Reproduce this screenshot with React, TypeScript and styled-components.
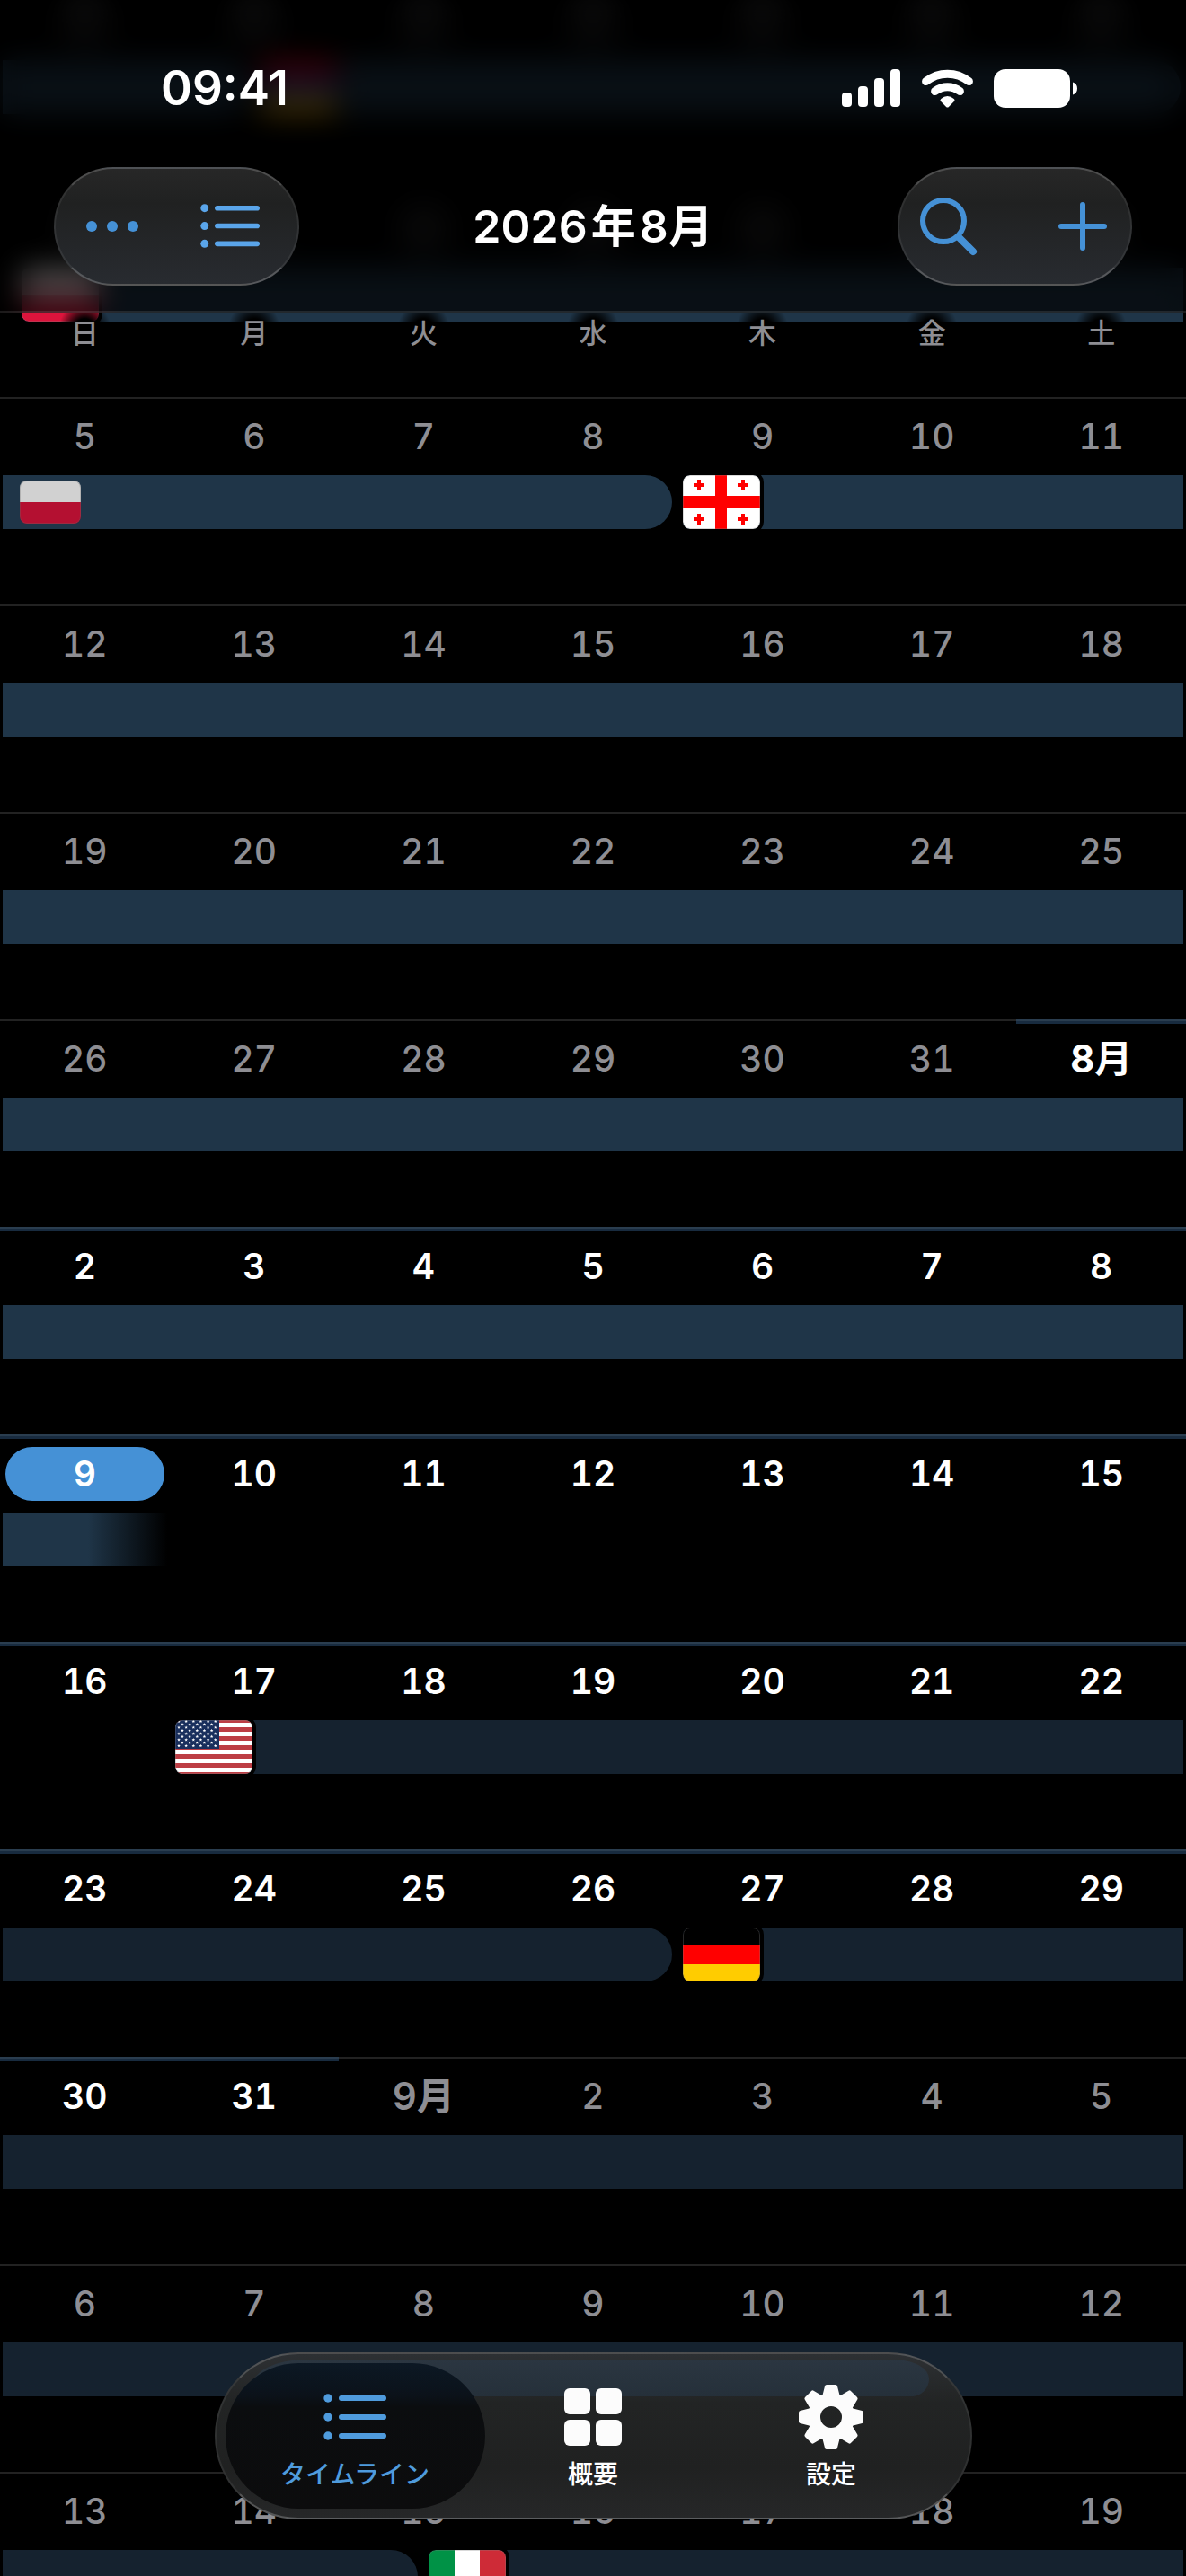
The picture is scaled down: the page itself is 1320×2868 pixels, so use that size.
import React from "react";
import styled, { createGlobalStyle, css } from "styled-components";

const blue = "#4591d6";
const grey = "#8e8e93";

const GlobalStyle = createGlobalStyle`
  *, *::before, *::after { box-sizing: border-box; }
  body {
    margin: 0;
    background: #000;
    color: #fff;
    font-family: Inter, "Noto Sans CJK JP", sans-serif;
  }
  button { font: inherit; color: inherit; border: 0; padding: 0; margin: 0; background: none; }
  svg { display: block; }
`;

const Screen = styled.div`
  position: relative;
  height: 100vh;
  overflow: hidden;
`;

/* ---------- timeline ---------- */

/* The list rests slightly scrolled, with its first week cut off at the top. */
const Weeks = styled.ol`
  list-style: none;
  padding: 0;
  margin: -20px 0 0;
`;

const Week = styled.li`
  height: 231px;
`;

const Days = styled.div`
  display: grid;
  grid-template-columns: repeat(7, 1fr);
  height: 87px;
`;

type Tone = "dim" | "current" | "covered";

const Day = styled.div<{ $tone: Tone }>`
  display: flex;
  justify-content: center;
  align-items: flex-start;
  padding: 14px 6px 0;
  background: linear-gradient(#222 0 2px, transparent 2px);
  ${(p) =>
    p.$tone === "current" &&
    css`
      background: linear-gradient(#2a3d4f 0 2px, #182b3f 2px 5px, transparent 5px);
    `}
  ${(p) =>
    p.$tone === "covered" &&
    css`
      background: radial-gradient(ellipse 40px 40px at center, #2c2c2e, transparent);
    `}
`;

const DayLabel = styled.time<{ $tone: Tone; $month?: boolean; $today?: boolean }>`
  width: 100%;
  height: 60px;
  line-height: 60px;
  border-radius: 30px;
  text-align: center;
  font-size: ${(p) => (p.$month ? 42 : 39)}px;
  font-weight: ${(p) => (p.$tone === "current" ? (p.$month ? 700 : 600) : p.$month ? 600 : 500)};
  font-variant-numeric: tabular-nums;
  color: ${(p) => (p.$tone === "current" ? "#fff" : grey)};
  background: ${(p) => (p.$today ? blue : "transparent")};
`;

/* Two columns per day: a stay can change at midday. */
const Track = styled.div`
  display: grid;
  grid-template-columns: repeat(14, 1fr);
  height: 60px;
`;

type Edge = "through" | "end" | "fade";

const Stay = styled.div<{
  $from: number;
  $to: number;
  $edge: Edge;
  $starts: boolean;
  $future?: boolean;
  $inset?: boolean;
}>`
  grid-row: 1;
  grid-column: ${(p) => p.$from + 1} / ${(p) => p.$to + 1};
  display: flex;
  align-items: center;
  height: 60px;
  margin-left: ${(p) => (p.$inset ? 24 : p.$starts ? 6 : 3)}px;
  margin-right: ${(p) => (p.$edge === "end" ? 6 : 3)}px;
  padding-left: ${(p) => (p.$starts ? 0 : 19)}px;
  border-radius: ${(p) => (p.$starts ? 8 : 0)}px ${(p) => (p.$edge === "end" ? 30 : 0)}px
    ${(p) => (p.$edge === "end" ? 30 : 0)}px ${(p) => (p.$starts ? 8 : 0)}px;
  background: ${(p) =>
    p.$edge === "fade"
      ? "linear-gradient(90deg, #1f3548 52%, transparent)"
      : p.$future
        ? "#15222f"
        : "#1f3548"};
  overflow: hidden;
`;

const FlagBox = styled.span<{ $small?: boolean }>`
  position: relative;
  flex: none;
  width: ${(p) => (p.$small ? 68 : 86)}px;
  height: ${(p) => (p.$small ? 48 : 60)}px;
  border-radius: 8px;
  overflow: hidden;
  ${(p) => (p.$small ? "filter: brightness(0.82);" : "outline: 4px solid #000;")}
  svg { width: 100%; height: 100%; }
  &::after {
    content: "";
    position: absolute;
    inset: 0;
    border-radius: 8px;
    border: 1px solid rgba(128, 128, 128, 0.3);
  }
`;

type Country = "am" | "pl" | "ge" | "us" | "de" | "it";

const starPath = Array.from({ length: 10 }, (_, i) => {
  const r = i % 2 ? 0.8 : 1.9;
  const a = (Math.PI * i) / 5 - Math.PI / 2;
  return `${i ? "L" : "M"}${(r * Math.cos(a)).toFixed(2)} ${(r * Math.sin(a)).toFixed(2)}`;
}).join("") + "Z";

const stars: [number, number][] = [];
for (let r = 0; r < 9; r++) {
  const odd = r % 2;
  for (let c = 0; c < (odd ? 5 : 6); c++) stars.push([4 + odd * 4 + c * 8.15, 1.5 + r * 3.4]);
}

const drawings: Record<Country, React.ReactNode> = {
  am: (
    <>
      <path fill="#d90012" d="M0 0h86v20H0z" />
      <path fill="#0033a0" d="M0 20h86v20H0z" />
      <path fill="#f2a800" d="M0 40h86v20H0z" />
    </>
  ),
  pl: (
    <>
      <path fill="#fff" d="M0 0h86v30H0z" />
      <path fill="#dc143c" d="M0 30h86v30H0z" />
    </>
  ),
  ge: (
    <>
      <path fill="#fff" d="M0 0h86v60H0z" />
      <path fill="#f00" d="M36 0h13v60H36zM0 23h86v14H0z" />
      <path
        stroke="#f00"
        strokeWidth="4"
        d="M12 11h12M18 5v12M61 11h12M67 5v12M12 49h12M18 43v12M61 49h12M67 43v12"
      />
    </>
  ),
  us: (
    <>
      <path fill="#fff" d="M0 0h86v60H0z" />
      {[-2, 8, 18, 28, 38, 48, 58].map((y) => (
        <rect key={y} y={y} width="86" height="5" fill="#bd3d44" />
      ))}
      <path fill="#192f5d" d="M0 0h49v32H0z" />
      {stars.map(([x, y]) => (
        <path key={`${x}-${y}`} d={starPath} fill="#fff" transform={`translate(${x} ${y})`} />
      ))}
    </>
  ),
  de: (
    <>
      <path fill="#000" d="M0 0h86v20H0z" />
      <path fill="#f00" d="M0 20h86v21H0z" />
      <path fill="#fc0" d="M0 41h86v19H0z" />
    </>
  ),
  it: (
    <>
      <path fill="#009246" d="M0 0h29v60H0z" />
      <path fill="#fff" d="M29 0h28v60H29z" />
      <path fill="#ce2b37" d="M57 0h29v60H57z" />
    </>
  ),
};

function Flag({ country, small }: { country: Country; small?: boolean }) {
  return (
    <FlagBox $small={small}>
      <svg viewBox="0 0 86 60" preserveAspectRatio="none" aria-hidden="true">
        {drawings[country]}
      </svg>
    </FlagBox>
  );
}

interface StayData {
  from?: number;
  to?: number;
  edge?: Edge;
  flag?: Country;
  smallFlag?: Country;
  future?: boolean;
  inset?: boolean;
}

interface WeekData {
  days: string[];
  current?: [number, number];
  today?: number;
  stays: StayData[];
}

const range = (from: number) => Array.from({ length: 7 }, (_, i) => String(from + i));

const coveredWeeks: StayData[][] = [
  [{ to: 3, edge: "end" }, { from: 3, flag: "am", edge: "end" }],
  [{ flag: "pl", inset: true }],
];

const weeks: WeekData[] = [
  { days: range(5), stays: [{ to: 8, edge: "end", smallFlag: "pl" }, { from: 8, flag: "ge" }] },
  { days: range(12), stays: [{}] },
  { days: range(19), stays: [{}] },
  { days: ["26", "27", "28", "29", "30", "31", "8月"], current: [6, 7], stays: [{}] },
  { days: range(2), current: [0, 7], stays: [{}] },
  { days: range(9), current: [0, 7], today: 0, stays: [{ to: 2, edge: "fade" }] },
  { days: range(16), current: [0, 7], stays: [{ from: 2, flag: "us", future: true }] },
  {
    days: range(23),
    current: [0, 7],
    stays: [{ to: 8, edge: "end", future: true }, { from: 8, flag: "de", future: true }],
  },
  { days: ["30", "31", "9月", "2", "3", "4", "5"], current: [0, 2], stays: [{ future: true }] },
  { days: range(6), stays: [{ future: true }] },
  {
    days: range(13),
    stays: [{ to: 5, edge: "end", future: true }, { from: 5, flag: "it", future: true }],
  },
];

function Stays({ stays }: { stays: StayData[] }) {
  return (
    <Track>
      {stays.map((s, i) => (
        <Stay
          key={i}
          $from={s.from ?? 0}
          $to={s.to ?? 14}
          $edge={s.edge ?? "through"}
          $starts={!!s.flag}
          $future={s.future}
          $inset={s.inset}
        >
          {s.flag && <Flag country={s.flag} />}
          {s.smallFlag && <Flag country={s.smallFlag} small />}
        </Stay>
      ))}
    </Track>
  );
}

function Timeline() {
  return (
    <Weeks>
      {coveredWeeks.map((stays, i) => (
        <Week key={`covered-${i}`}>
          <Days>
            {[0, 1, 2, 3, 4, 5, 6].map((d) => (
              <Day key={d} $tone="covered" />
            ))}
          </Days>
          <Stays stays={stays} />
        </Week>
      ))}
      {weeks.map((week, w) => (
        <Week key={w}>
          <Days>
            {week.days.map((label, d) => {
              const [a, b] = week.current ?? [0, 0];
              const tone: Tone = d >= a && d < b ? "current" : "dim";
              return (
                <Day key={d} $tone={tone}>
                  <DayLabel $tone={tone} $month={label.endsWith("月")} $today={week.today === d}>
                    {label}
                  </DayLabel>
                </Day>
              );
            })}
          </Days>
          <Stays stays={week.stays} />
        </Week>
      ))}
    </Weeks>
  );
}

/* ---------- header ---------- */

const Header = styled.header`
  position: absolute;
  inset: 0 0 auto;
`;

const NavArea = styled.div`
  height: 348px;
  border-bottom: 2px solid rgba(255, 255, 255, 0.1);
  background: rgba(0, 0, 0, 0.7);
  backdrop-filter: blur(16px);
`;

const StatusBar = styled.div`
  display: flex;
  align-items: center;
  justify-content: space-between;
  height: 186px;
  padding: 10px 120px 0 179px;
`;

const Clock = styled.time`
  font-size: 53px;
  line-height: 64px;
  font-weight: 600;
`;

const StatusIcons = styled.div`
  display: flex;
  align-items: center;
  gap: 23px;
`;

const Toolbar = styled.div`
  display: grid;
  grid-template-columns: 1fr auto 1fr;
  align-items: center;
  padding: 0 60px;
`;

const Title = styled.h1`
  display: flex;
  gap: 4px;
  margin: 0;
  font-size: 50px;
  line-height: 60px;
  font-weight: 600;
`;

const glass = css`
  border: 2px solid rgba(255, 255, 255, 0.07);
  border-top-color: rgba(255, 255, 255, 0.18);
  border-bottom-color: rgba(255, 255, 255, 0.22);
`;

const ButtonGroup = styled.div<{ $end?: boolean }>`
  ${glass}
  display: flex;
  justify-content: space-between;
  justify-self: ${(p) => (p.$end ? "end" : "start")};
  width: ${(p) => (p.$end ? 261 : 273)}px;
  height: 132px;
  padding-right: ${(p) => (p.$end ? 0 : 12)}px;
  border-radius: 66px;
  background: linear-gradient(#272727, #202121 30%, #282b30);
`;

const IconButton = styled.button<{ $wide?: boolean }>`
  display: flex;
  align-items: center;
  justify-content: center;
  width: ${(p) => (p.$wide ? 126 : 106)}px;
  color: ${blue};
`;

const Weekdays = styled.div`
  display: grid;
  grid-template-columns: repeat(7, 1fr);
`;

const Weekday = styled.div`
  text-align: center;
  font-size: 31px;
  line-height: 46px;
  font-weight: 500;
  color: ${grey};
  background: radial-gradient(ellipse 30px 36px at center, #000 45%, transparent);
`;

function SignalIcon() {
  return (
    <svg width="66" height="42" viewBox="0 0 66 42" fill="#fff" role="img" aria-label="電波">
      <rect x="0" y="26" width="11" height="16" rx="4" />
      <rect x="18" y="19" width="11" height="23" rx="4" />
      <rect x="36" y="10" width="11" height="32" rx="4" />
      <rect x="54" y="0" width="11" height="42" rx="4" />
    </svg>
  );
}

function WifiIcon() {
  return (
    <svg width="57" height="43" viewBox="0 0 57 43" fill="none" role="img" aria-label="Wi-Fi">
      <g stroke="#fff" strokeWidth="9" strokeLinecap="round">
        <path d="M4.6 13.6A38 38 0 0 1 52.4 13.6" />
        <path d="M14.6 24.6A22 22 0 0 1 42.4 24.6" />
      </g>
      <path
        d="M28.5 40.5L22.6 34.6Q28.5 29.6 34.4 34.6Z"
        fill="#fff"
        stroke="#fff"
        strokeWidth="4"
        strokeLinejoin="round"
      />
    </svg>
  );
}

function BatteryIcon() {
  return (
    <svg width="94" height="43" viewBox="0 0 94 43" fill="#fff" role="img" aria-label="バッテリー">
      <rect width="85" height="43" rx="13" />
      <path d="M88 14.5C91.3 15.5 93 18 93 21.5S91.3 27.5 88 28.5Z" />
    </svg>
  );
}

function ListIcon({ width, color }: { width: number; color: string }) {
  return (
    <svg width={width} viewBox="0 0 70 52" aria-hidden="true" fill={color}>
      {[5, 26, 47].map((y) => (
        <g key={y}>
          <circle cx="5" cy={y} r="4.7" />
          <rect x="17" y={y - 3} width="53" height="6" rx="3" />
        </g>
      ))}
    </svg>
  );
}

function MoreIcon() {
  return (
    <svg width="60" height="12" viewBox="0 0 60 12" fill="currentColor" aria-hidden="true">
      <circle cx="7" cy="6" r="6" />
      <circle cx="30" cy="6" r="6" />
      <circle cx="53" cy="6" r="6" />
    </svg>
  );
}

function SearchIcon() {
  return (
    <svg width="76" height="66" viewBox="0 0 76 66" fill="none" stroke="currentColor" aria-hidden="true">
      <circle cx="34" cy="27" r="23" strokeWidth="6" />
      <path d="M51 45L67 61" strokeWidth="8" strokeLinecap="round" />
    </svg>
  );
}

function PlusIcon() {
  return (
    <svg width="54" height="54" viewBox="0 0 54 54" stroke="currentColor" strokeWidth="6" strokeLinecap="round" aria-hidden="true">
      <path d="M27 3V51M3 27H51" />
    </svg>
  );
}

/* ---------- tab bar ---------- */

const TabDock = styled.div`
  position: absolute;
  inset: auto 0 63px;
  display: flex;
  justify-content: center;
`;

const TabBar = styled.nav`
  ${glass}
  position: relative;
  display: flex;
  height: 186px;
  padding: 10px;
  border-radius: 93px;
  background: linear-gradient(#2d3033, #222424 30%, #202121 70%, #262728);

  &::before {
    content: "";
    position: absolute;
    inset: 6px 46px auto 40px;
    height: 41px;
    border-radius: 60px 40px 20px 20px / 30px 22px 20px 0;
    background: linear-gradient(#2b3641, #25303a);
  }
`;

const Tab = styled.button<{ $active?: boolean }>`
  position: relative;
  display: flex;
  flex-direction: column;
  align-items: center;
  width: 289px;
  height: 162px;
  border-radius: 81px;
  color: ${(p) => (p.$active ? "#4f9bdd" : "#fff")};
  background: ${(p) => (p.$active ? "linear-gradient(#0c1824, #0b121a 22%, #0b0d0f 30%, #0c0c0d)" : "none")};

  & + & { margin-left: -24px; }
`;

const TabIcon = styled.span`
  display: grid;
  place-items: center;
  height: 72px;
  margin-top: 24px;
`;

const TabLabel = styled.span`
  font-size: 28px;
  line-height: 40px;
  margin-top: 8px;
  font-weight: 500;
`;

function GridIcon() {
  return (
    <svg width="64" height="64" viewBox="0 0 64 64" fill="#fcfcfc" aria-hidden="true">
      <rect x="0" y="0" width="29" height="29" rx="6" />
      <rect x="35" y="0" width="29" height="29" rx="6" />
      <rect x="0" y="35" width="29" height="29" rx="6" />
      <rect x="35" y="35" width="29" height="29" rx="6" />
    </svg>
  );
}

function GearIcon() {
  return (
    <svg width="72" height="72" viewBox="-36 -36 72 72" aria-hidden="true">
      <circle r="19" fill="none" stroke="#fcfcfc" strokeWidth="14" />
      {[0, 45, 90, 135, 180, 225, 270, 315].map((a) => (
        <path
          key={a}
          d="M-8 -22L-5 -34L5 -34L8 -22Z"
          transform={`rotate(${a})`}
          fill="#fcfcfc"
          stroke="#fcfcfc"
          strokeWidth="4"
          strokeLinejoin="round"
        />
      ))}
    </svg>
  );
}

export default function App() {
  return (
    <>
      <GlobalStyle />
      <Screen>
        <main>
          <Timeline />
        </main>
        <Header>
          <NavArea>
            <StatusBar>
              <Clock>09:41</Clock>
              <StatusIcons>
                <SignalIcon />
                <WifiIcon />
                <BatteryIcon />
              </StatusIcons>
            </StatusBar>
            <Toolbar>
              <ButtonGroup>
                <IconButton $wide aria-label="その他">
                  <MoreIcon />
                </IconButton>
                <IconButton $wide aria-label="リスト表示">
                  <ListIcon width={66} color="#5aa5ea" />
                </IconButton>
              </ButtonGroup>
              <Title>
                <span>2026</span>
                <span>年</span>
                <span>8月</span>
              </Title>
              <ButtonGroup $end>
                <IconButton aria-label="検索">
                  <SearchIcon />
                </IconButton>
                <IconButton aria-label="追加">
                  <PlusIcon />
                </IconButton>
              </ButtonGroup>
            </Toolbar>
          </NavArea>
          <Weekdays>
            {["日", "月", "火", "水", "木", "金", "土"].map((d) => (
              <Weekday key={d}>{d}</Weekday>
            ))}
          </Weekdays>
        </Header>
        <TabDock>
          <TabBar>
            <Tab $active aria-current="page">
              <TabIcon>
                <ListIcon width={70} color="#4f9bdd" />
              </TabIcon>
              <TabLabel>タイムライン</TabLabel>
            </Tab>
            <Tab>
              <TabIcon>
                <GridIcon />
              </TabIcon>
              <TabLabel>概要</TabLabel>
            </Tab>
            <Tab>
              <TabIcon>
                <GearIcon />
              </TabIcon>
              <TabLabel>設定</TabLabel>
            </Tab>
          </TabBar>
        </TabDock>
      </Screen>
    </>
  );
}
